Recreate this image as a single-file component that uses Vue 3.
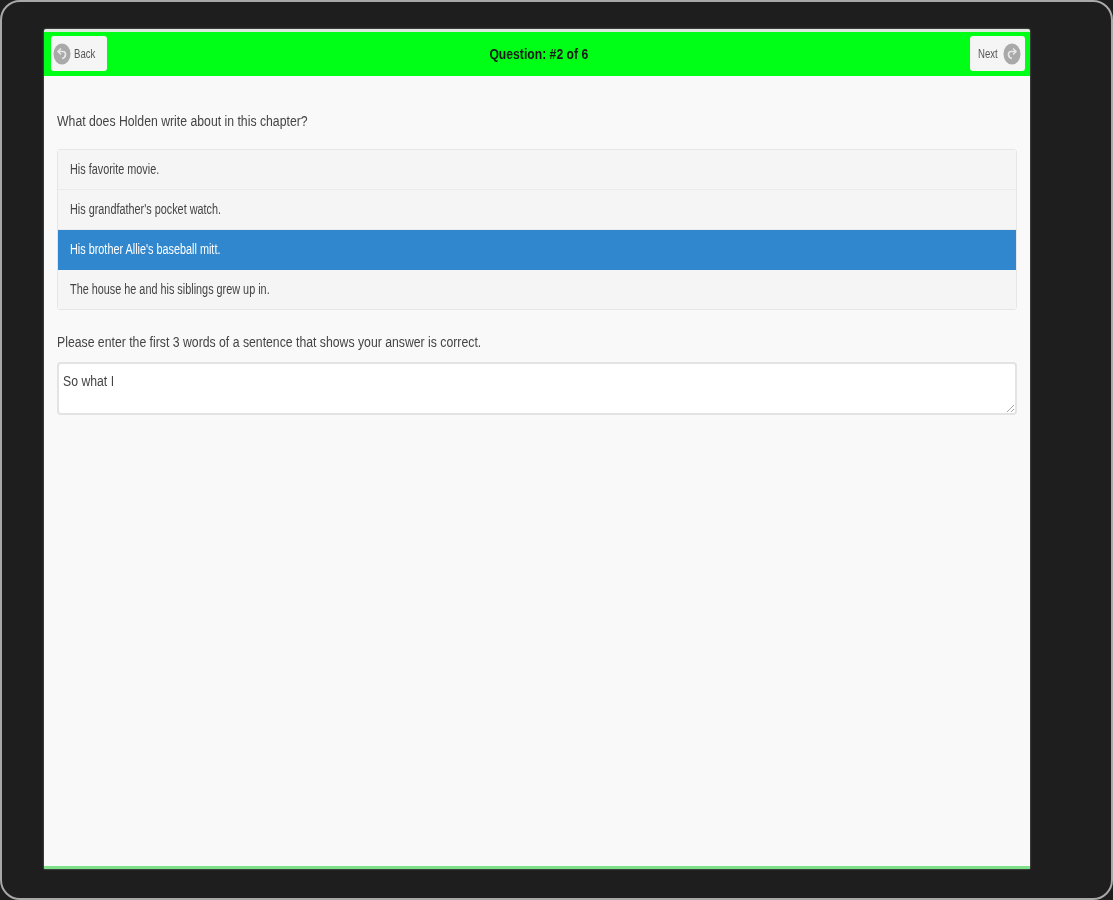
<script setup>
const answers = [
  { text: 'His favorite movie.', active: false },
  { text: "His grandfather's pocket watch.", active: false },
  { text: "His brother Allie's baseball mitt.", active: true },
  { text: 'The house he and his siblings grew up in.', active: false },
]
</script>

<template>
  <div class="frame">
    <main class="card">
      <header class="bar">
        <button class="nav">
          <svg class="ico" width="18" height="22" viewBox="0 0 18 22">
            <ellipse cx="9" cy="11" rx="8.5" ry="10.5" fill="#a9a9a9" />
            <path d="M5 8.5 L10 8.5 C13.5 8.5 13.5 14.5 9 15.5" fill="none" stroke="#e8e8e8" stroke-width="1.7" />
            <path d="M8 5.5 L5 8.5 L8 11.5" fill="none" stroke="#e8e8e8" stroke-width="1.5" />
          </svg>
          <span class="squeeze small">Back</span>
        </button>
        <div class="title"><span class="squeeze">Question: #2 of 6</span></div>
        <button class="nav next">
          <span class="squeeze small">Next</span>
          <svg class="ico" width="18" height="22" viewBox="0 0 18 22">
            <ellipse cx="9" cy="11" rx="8.5" ry="10.5" fill="#a9a9a9" />
            <path d="M13 8.5 L8 8.5 C4.5 8.5 4.5 14.5 9 15.5" fill="none" stroke="#e8e8e8" stroke-width="1.7" />
            <path d="M10 5.5 L13 8.5 L10 11.5" fill="none" stroke="#e8e8e8" stroke-width="1.5" />
          </svg>
        </button>
      </header>
      <section class="body">
        <p class="question"><span class="squeeze">What does Holden write about in this chapter?</span></p>
        <ul class="list">
          <li v-for="a in answers" :key="a.text" class="item" :class="{ active: a.active }">
            <span class="squeeze narrow">{{ a.text }}</span>
          </li>
        </ul>
        <p class="prompt"><span class="squeeze">Please enter the first 3 words of a sentence that shows your answer is correct.</span></p>
        <div class="area">
          <span class="squeeze">So what I</span>
          <svg class="grip" width="8" height="8" viewBox="0 0 8 8">
            <path d="M1 8 L8 1 M5 8 L8 5" stroke="#a5a5a5" stroke-width="1" fill="none" />
          </svg>
        </div>
      </section>
    </main>
  </div>
</template>

<style>
html, body { margin: 0; background: #1e1e1e; }
</style>

<style scoped>
.frame {
  box-sizing: border-box;
  width: 1113px;
  height: 900px;
  padding: 27px 81px 29px 42px;
  background: #1e1e1e;
  border: 2px solid #a8a8a8;
  border-radius: 20px;
  font-family: "Liberation Sans", Arial, sans-serif;
  font-size: 14px;
  color: #444;
}
.card {
  box-sizing: border-box;
  height: 840px;
  display: flex;
  flex-direction: column;
  background: #f9f9f9;
  border-top: 3px solid #dfe8df;
  border-bottom: 3px solid #7fe08a;
  box-shadow: 0 0 2px #888;
  border-radius: 2px 2px 0 0;
}
.bar {
  height: 44px;
  flex: none;
  display: flex;
  align-items: center;
  justify-content: space-between;
  padding: 0 5px 0 7px;
  background: #00ff16;
}
.nav {
  box-sizing: border-box;
  width: 56px;
  height: 35px;
  margin-top: -2px;
  display: flex;
  align-items: center;
  gap: 3px;
  padding: 2px 2px 0;
  border: 0;
  border-radius: 3px;
  background: #f5f5f5;
  font: inherit;
  color: #555;
}
.next { justify-content: flex-end; width: 55px; padding-right: 4px; gap: 2px; }
.ico { flex: none; filter: blur(0.6px); }
.title {
  flex: 1;
  text-align: center;
  font-weight: bold;
  color: #1a1a1a;
}
.title .squeeze { transform-origin: center; transform: scaleX(0.87); }
.squeeze {
  display: inline-block;
  white-space: nowrap;
  transform: scaleX(0.875);
  transform-origin: left center;
  filter: blur(0.7px);
}
.narrow { transform: scaleX(0.775); }
.small { font-size: 12px; width: 23px; transform: scaleX(0.8); }
.body {
  padding: 0 13px 0 13px;
}
.question {
  margin: 37px 0 19px;
  line-height: 17px;
}
.list {
  margin: 0;
  padding: 0;
  list-style: none;
  border: 1px solid #e6e6e6;
  border-radius: 3px;
}
.item {
  box-sizing: border-box;
  height: 40px;
  display: flex;
  align-items: center;
  padding: 0 0 2px 12px;
  background: #f5f5f5;
  border-bottom: 1px solid #ebebeb;
}
.item:last-child { border-bottom: 0; height: 39px; padding-bottom: 1px; }
.item.active {
  background: #3187cd;
  color: #fff;
  border-bottom: 0;
}
.prompt {
  margin: 23px 0 11px;
  line-height: 18px;
}
.area {
  position: relative;
  box-sizing: border-box;
  height: 53px;
  padding: 7px 4px;
  line-height: 20px;
  background: #fff;
  border: 2px solid #e3e3e3;
  border-radius: 4px;
}
.grip { position: absolute; right: 1px; bottom: 1px; }
</style>
